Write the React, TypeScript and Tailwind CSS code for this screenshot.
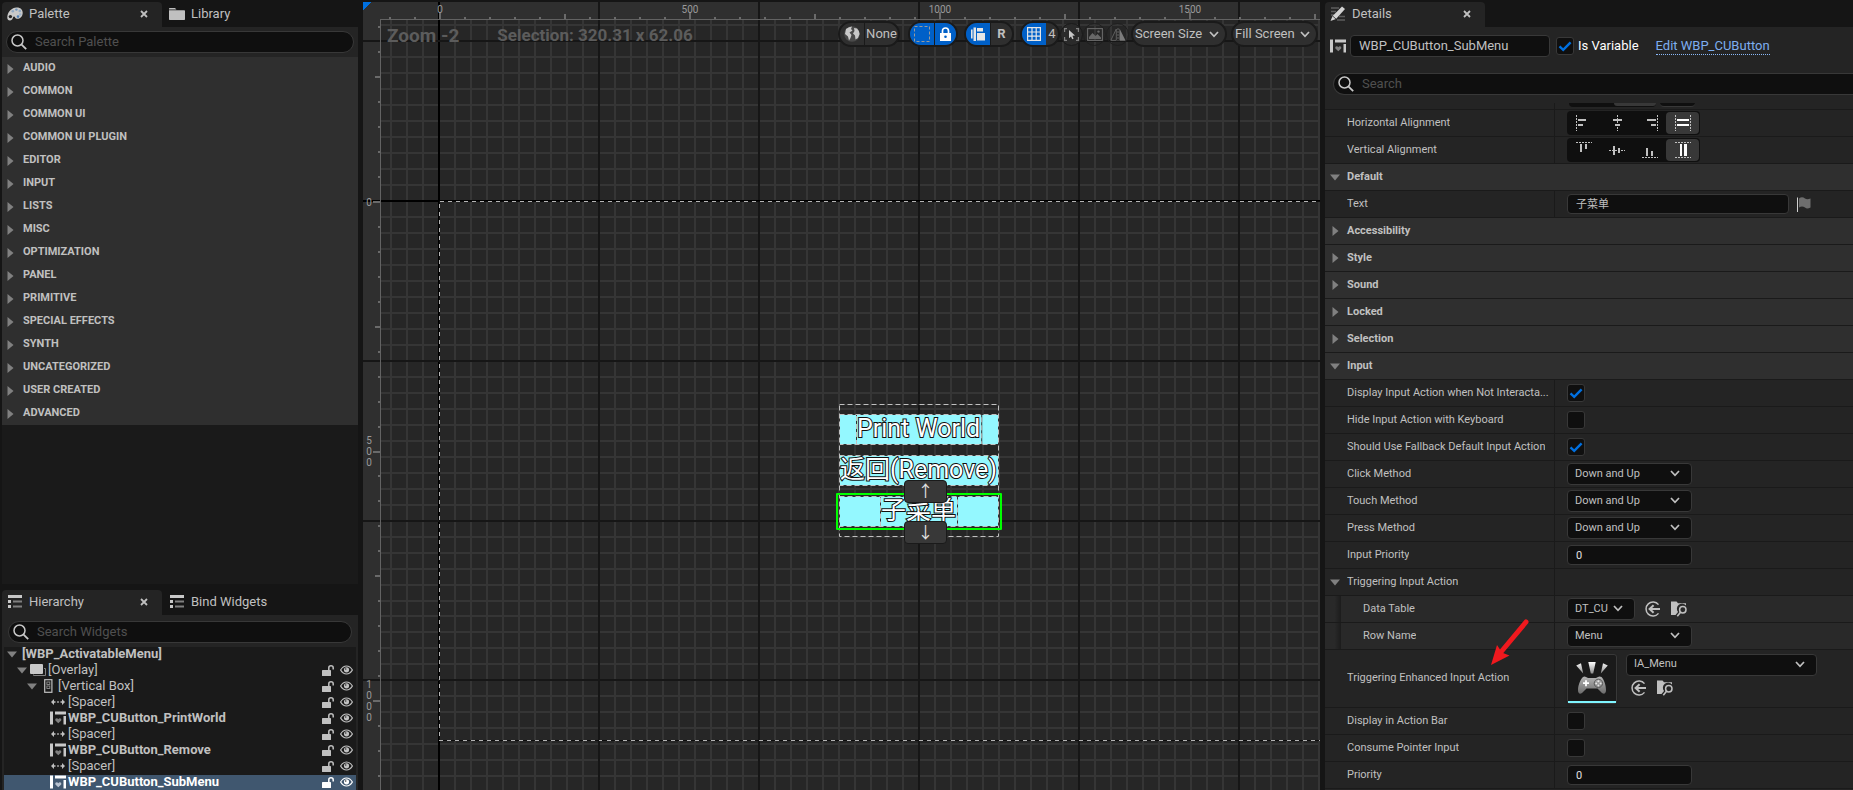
import React, { useState } from "react";

const PALETTE_GROUPS = [
  "AUDIO",
  "COMMON",
  "COMMON UI",
  "COMMON UI PLUGIN",
  "EDITOR",
  "INPUT",
  "LISTS",
  "MISC",
  "OPTIMIZATION",
  "PANEL",
  "PRIMITIVE",
  "SPECIAL EFFECTS",
  "SYNTH",
  "UNCATEGORIZED",
  "USER CREATED",
  "ADVANCED",
];

type TreeItem = {
  label: string;
  icon: "overlay" | "vbox" | "spacer" | "widget";
  indent: string;
  open?: boolean;
  bold?: boolean;
  selected?: boolean;
};

const TREE: TreeItem[] = [
  { label: "[Overlay]", icon: "overlay", indent: "pl-[13px]", open: true },
  { label: "[Vertical Box]", icon: "vbox", indent: "pl-[23px]", open: true },
  { label: "[Spacer]", icon: "spacer", indent: "pl-[46px]" },
  { label: "WBP_CUButton_PrintWorld", icon: "widget", indent: "pl-[46px]", bold: true },
  { label: "[Spacer]", icon: "spacer", indent: "pl-[46px]" },
  { label: "WBP_CUButton_Remove", icon: "widget", indent: "pl-[46px]", bold: true },
  { label: "[Spacer]", icon: "spacer", indent: "pl-[46px]" },
  { label: "WBP_CUButton_SubMenu", icon: "widget", indent: "pl-[46px]", bold: true, selected: true },
];

/* ---------- icons ---------- */

function ArrowRight() {
  return (
    <svg width="7" height="10" viewBox="0 0 7 10" fill="#808080" className="shrink-0">
      <path d="M0.5 0 L6.5 5 L0.5 10 Z" />
    </svg>
  );
}

function ArrowDown() {
  return (
    <svg width="10" height="7" viewBox="0 0 10 7" fill="#808080" className="shrink-0">
      <path d="M0 0.5 H10 L5 6.5 Z" />
    </svg>
  );
}

function Chevron({ className = "" }: { className?: string }) {
  return (
    <svg width="10" height="7" viewBox="0 0 10 7" className={className} fill="none" stroke="#c0c0c0" strokeWidth="1.7">
      <path d="M1 1 L5 5.3 L9 1" />
    </svg>
  );
}

function SearchIcon() {
  return (
    <svg width="16" height="16" viewBox="0 0 16 16" fill="none" stroke="#c8c8c8" strokeWidth="1.5" className="shrink-0">
      <circle cx="6.5" cy="6.5" r="5.5" />
      <path d="M10.6 10.6 L15.2 15.2" strokeWidth="1.8" />
    </svg>
  );
}

function PaletteIcon() {
  return (
    <svg width="16" height="14" viewBox="0 0 16 14" className="shrink-0">
      <path
        d="M9.5 0.5 C13 0.2 15.8 2.4 15.7 6 C15.6 9.8 12.5 12.2 9.6 11.8 C7.8 11.5 8.2 9.6 7 9.6 C5.6 9.6 6.2 13.5 3 13.5 C1 13.5 0 12 0.3 9.5 C0.9 4.5 4.8 0.8 9.5 0.5 Z"
        fill="#c9c9c9"
      />
      <circle cx="3.4" cy="9.6" r="1.7" fill="#242424" />
      <circle cx="5.8" cy="4.3" r="1.3" fill="#8fa9c4" />
      <circle cx="9.4" cy="2.6" r="1.2" fill="#6f94bb" />
      <circle cx="12.8" cy="4" r="1.3" fill="#8fa9c4" />
      <circle cx="13.2" cy="7.4" r="1.2" fill="#9db4cb" />
      <circle cx="11" cy="9.6" r="1.3" fill="#4f7fb5" />
    </svg>
  );
}

function FolderIcon() {
  return (
    <svg width="16" height="12" viewBox="0 0 16 12" fill="#c0c0c0" className="shrink-0">
      <path d="M0.5 0 H6 L7.5 1.5 H0 V0.5 Z M0 2.3 H15.3 Q16 2.3 16 3 V11.3 Q16 12 15.3 12 H0.7 Q0 12 0 11.3 Z" />
    </svg>
  );
}

function ListIcon() {
  return (
    <svg width="16" height="13" viewBox="0 0 16 13" className="shrink-0">
      <path d="M1 0 H15 V3 H1 Z M1 5 H4 V8 H1 Z M1 10 H4 V13 H1 Z" fill="#c8c8c8" />
      <path d="M6 5.5 H15 V7.5 H6 Z M6 10.5 H15 V12.5 H6 Z" fill="#808080" />
    </svg>
  );
}

function DetailsIcon() {
  return (
    <svg width="16" height="16" viewBox="0 0 16 16" className="shrink-0">
      <path d="M1 2 H9 M1 5.5 H6 M1 9 H4 M9 10.5 H15 M7 14 H15" stroke="#5c5c5c" strokeWidth="1.6" />
      <path d="M12 0.5 L15 3 L6 13 L0.5 15 L2.6 10 Z" fill="#d2d2d2" />
      <path d="M2.6 10 L6 13" stroke="#242424" strokeWidth="0.8" />
    </svg>
  );
}

function WidgetIcon({ bright = false }: { bright?: boolean }) {
  return (
    <svg width="16" height="14" viewBox="0 0 16 14" className="shrink-0" fill={bright ? "#ffffff" : "#c8c8c8"}>
      <path d="M0 0.5 H3 V13.5 H0 Z M5 0.5 H16 V3.5 H5 Z M13.5 5 H16 V13.5 H13.5 Z" />
      <path d="M8.3 12.3 L5.4 9.4 C4.6 7.2 7.4 6.4 8.3 8.2 C9.2 6.4 12 7.2 11.2 9.4 Z" fill={bright ? "#b8c2d0" : "#808080"} />
    </svg>
  );
}

function OverlayIcon() {
  return (
    <svg width="16" height="12" viewBox="0 0 16 12" className="shrink-0">
      <path d="M14 4.5 H15.5 V11.5 H3.5 V10.5" fill="none" stroke="#808080" />
      <rect x="0" y="0" width="13" height="10" rx="1" fill="#c8c8c8" />
    </svg>
  );
}

function VBoxIcon() {
  return (
    <svg width="9" height="14" viewBox="0 0 9 14" className="shrink-0" fill="none">
      <rect x="0.7" y="0.7" width="7.2" height="12.6" stroke="#c0c0c0" strokeWidth="1.2" />
      <rect x="2.9" y="3" width="2.9" height="2.5" stroke="#909090" strokeWidth="0.9" />
      <rect x="2.9" y="7" width="2.9" height="2.5" stroke="#909090" strokeWidth="0.9" />
    </svg>
  );
}

function SpacerIcon() {
  return (
    <svg width="16" height="8" viewBox="0 0 16 8" className="shrink-0" fill="#c0c0c0">
      <path d="M1 4 L4 1 V3.2 H5.5 V4.8 H4 V7 Z M7.2 3.2 H8.8 V4.8 H7.2 Z M15 4 L12 1 V3.2 H10.5 V4.8 H12 V7 Z" />
    </svg>
  );
}

function UnlockIcon() {
  return (
    <svg width="12" height="11" viewBox="0 0 12 11" className="shrink-0">
      <rect x="0" y="5" width="9" height="6" rx="0.6" fill="currentColor" />
      <path d="M6.8 5 V2.8 Q6.8 0.8 9 0.8 Q11.2 0.8 11.2 2.8 V4.6" fill="none" stroke="currentColor" strokeWidth="1.5" />
    </svg>
  );
}

function EyeIcon() {
  return (
    <svg width="13" height="10" viewBox="0 0 13 10" className="shrink-0" fill="none" stroke="currentColor">
      <path d="M0.6 5 Q3 1 6.5 1 Q10 1 12.4 5 Q10 9 6.5 9 Q3 9 0.6 5 Z" strokeWidth="1.2" />
      <circle cx="6.5" cy="4.8" r="2.6" fill="currentColor" stroke="none" />
      <circle cx="5.7" cy="4" r="0.8" fill="#333" stroke="none" />
    </svg>
  );
}

function UseIcon() {
  return (
    <svg width="16" height="16" viewBox="0 0 16 16" fill="none" stroke="#c0c0c0" strokeWidth="1.5">
      <path d="M13.5 3.6 A7 7 0 1 0 13.5 12.4" />
      <path d="M15 8 H5 M8.6 4.2 L4.6 8 L8.6 11.8" strokeWidth="2" />
    </svg>
  );
}

function BrowseIcon() {
  return (
    <svg width="16" height="16" viewBox="0 0 16 16">
      <path d="M0 0.5 H5.5 L7 2.2 H15 V4.6 A5 5 0 0 0 7 11 L4.5 14 H0 Z" fill="#c0c0c0" />
      <circle cx="11.8" cy="8.8" r="3.2" fill="none" stroke="#c0c0c0" strokeWidth="1.5" />
      <path d="M9.5 11.2 L6.3 15.2" stroke="#c0c0c0" strokeWidth="1.6" />
    </svg>
  );
}

function FlagIcon() {
  return (
    <svg width="14" height="15" viewBox="0 0 14 15">
      <path d="M0.5 0.5 V15" stroke="#d0d0d0" />
      <path d="M2 1.5 Q5 -1 8 1.5 Q10 3 13.5 1.5 V10.5 Q10 12.5 8 10.5 Q5 8.5 2 10.5 Z" fill="#6e6e6e" />
    </svg>
  );
}

function GamepadThumb() {
  return (
    <svg width="36" height="36" viewBox="0 0 36 36" className="shrink-0">
      <defs>
        <linearGradient id="pad" x1="0" y1="0" x2="0" y2="1">
          <stop offset="0" stopColor="#b4b4b4" />
          <stop offset="1" stopColor="#6c6c6c" />
        </linearGradient>
        <linearGradient id="ray" x1="0" y1="0" x2="0" y2="1">
          <stop offset="0" stopColor="#ffffff" />
          <stop offset="1" stopColor="#8c8c8c" />
        </linearGradient>
      </defs>
      <path d="M14.3 1 H21.7 L19.2 12.5 H16.8 Z M2.2 4.4 L7 2.2 L9.2 12.6 Z M33.8 4.4 L29 2.2 L26.8 12.6 Z" fill="url(#ray)" />
      <path
        d="M9 16 Q10.5 14.8 12 16 L14 17 H22 L24 16 Q25.5 14.8 27.5 16 C30.5 19 32 25 32 29 C32 33.5 29 33.5 27 31 L23.5 27.5 H12.5 L9 31 C7 33.5 4 33.5 4 29 C4 25 5.8 19 9 16 Z"
        fill="url(#pad)"
      />
      <path d="M12 19.2 V25.2 M9 22.2 H15" stroke="#ffffff" strokeWidth="1.8" />
      <circle cx="24.4" cy="22.4" r="4.2" fill="none" stroke="#5c5c5c" />
      <g fill="#e6e6e6">
        <circle cx="24.4" cy="20.2" r="1" />
        <circle cx="24.4" cy="24.6" r="1" />
        <circle cx="22.2" cy="22.4" r="1" />
        <circle cx="26.6" cy="22.4" r="1" />
      </g>
    </svg>
  );
}

/* ---------- shared pieces ---------- */

function Tabs({ first, second }: { first: [React.ReactNode, string]; second?: [React.ReactNode, string] }) {
  return (
    <div className="flex h-[25px] shrink-0 text-[13px] text-[#c0c0c0]">
      <div className="flex w-[160px] items-center gap-1.5 rounded-t bg-[#242424] pb-0.5 pl-[5px]">
        {first[0]}
        <span className="flex-1">{first[1]}</span>
        <button aria-label={`Close ${first[1]}`} className="mr-3 p-0.5">
          <svg width="8" height="8" viewBox="0 0 8 8" stroke="#c0c0c0" strokeWidth="1.8">
            <path d="M1 1 L7 7 M7 1 L1 7" />
          </svg>
        </button>
      </div>
      {second && (
        <button className="flex items-center gap-1.5 pb-0.5 pl-[7px]">
          {second[0]}
          {second[1]}
        </button>
      )}
    </div>
  );
}

function SearchBox({ placeholder, className }: { placeholder: string; className: string }) {
  return (
    <label className={`flex h-[22px] shrink-0 items-center gap-2 border border-[#383838] bg-[#0f0f0f] pl-1 ${className}`}>
      <SearchIcon />
      <input
        type="text"
        aria-label={placeholder}
        placeholder={placeholder}
        className="h-5 min-w-0 flex-1 bg-transparent pb-0.5 text-[13px] text-[#c0c0c0] outline-none placeholder:text-[#4f4f4f]"
      />
    </label>
  );
}

function Checkbox({ id, defaultChecked = false }: { id: string; defaultChecked?: boolean }) {
  const [checked, setChecked] = useState(defaultChecked);
  return (
    <span className="relative block size-[18px] shrink-0">
      <input
        id={id}
        type="checkbox"
        checked={checked}
        onChange={(e) => setChecked(e.target.checked)}
        className="block size-[18px] appearance-none rounded-[3px] border border-[#383838] bg-[#0f0f0f]"
      />
      {checked && (
        <svg viewBox="0 0 18 18" className="pointer-events-none absolute inset-0" fill="none" stroke="#0070e0" strokeWidth="2.4">
          <path d="M3.5 9.4 L7.2 12.8 L14.6 5.4" />
        </svg>
      )}
    </span>
  );
}

function Select({ id, value, className }: { id: string; value: string; className: string }) {
  return (
    <span className={`relative block h-[22px] ${className}`}>
      <select
        id={id}
        aria-label={value}
        className="block h-[22px] w-full appearance-none rounded border border-[#383838] bg-[#0f0f0f] pl-[7px] text-[11px] text-[#c0c0c0]"
      >
        <option>{value}</option>
      </select>
      <Chevron className="pointer-events-none absolute right-3 top-[7px]" />
    </span>
  );
}

function NumberBox({ id }: { id: string }) {
  return (
    <input
      id={id}
      type="text"
      defaultValue="0"
      className="h-5 w-[125px] rounded border border-[#383838] bg-[#0f0f0f] px-2 text-[11px] text-[#e0e0e0]"
    />
  );
}

function Section({ title, open = false }: { title: string; open?: boolean }) {
  return (
    <button className="flex h-[27px] w-full shrink-0 items-center border-b border-[#1a1a1a] bg-[#2f2f2f] text-left text-[11px] font-bold text-[#c0c0c0]">
      <span className="flex w-[22px] justify-center pr-0.5">{open ? <ArrowDown /> : <ArrowRight />}</span>
      {title}
    </button>
  );
}

type RowProps = {
  label: string;
  htmlFor?: string;
  nested?: boolean;
  arrow?: boolean;
  height?: string;
  children?: React.ReactNode;
};

function Row({ label, htmlFor, nested, arrow, height = "h-[27px]", children }: RowProps) {
  return (
    <div className={`flex shrink-0 border-b border-[#1a1a1a] ${height} ${nested ? "bg-[#292929]" : "bg-[#242424]"}`}>
      <div className="flex w-[230px] shrink-0 items-center border-r border-[#1a1a1a] text-[11px] text-[#c0c0c0]">
        {nested ? (
          <span className="mr-[22px] h-full w-4 bg-linear-to-r from-[#292929] from-60% to-[#1c1c1c]"></span>
        ) : (
          <span className="flex w-[22px] shrink-0 justify-center pr-0.5">{arrow && <ArrowDown />}</span>
        )}
        <label htmlFor={htmlFor} className="truncate">
          {label}
        </label>
      </div>
      <div className="flex items-center pl-3">{children}</div>
    </div>
  );
}

function AlignGroup({ label, icons }: { label: string; icons: React.ReactNode[] }) {
  return (
    <div role="group" aria-label={label} className="flex h-6 w-[133px] rounded bg-[#0f0f0f] p-px">
      {icons.map((icon, i) => (
        <button
          key={i}
          aria-label={`${label} ${i + 1}`}
          className={`flex flex-1 items-center justify-center rounded ${i === 3 ? "bg-[#383838]" : ""}`}
        >
          <svg width="16" height="16" viewBox="0 0 16 16" fill={i === 3 ? "#ffffff" : "#c0c0c0"} stroke="none">
            {icon}
          </svg>
        </button>
      ))}
    </div>
  );
}

const dotted = { stroke: "#c0c0c0", strokeWidth: 1, strokeDasharray: "2 1" };

const H_ICONS = [
  <g><path d="M0.5 0 V16" {...dotted} /><path d="M2 4 H10 V6 H2 Z M2 9 H7 V11 H2 Z" /></g>,
  <g><path d="M8.5 0 V16" {...dotted} /><path d="M4 4 H13 V6 H4 Z M6 9 H11 V11 H6 Z" /></g>,
  <g><path d="M15.5 0 V16" {...dotted} /><path d="M5 4 H14 V6 H5 Z M9 9 H14 V11 H9 Z" /></g>,
  <g><path d="M0.5 0 V16 M15.5 0 V16" {...dotted} /><path d="M2 4 H14 V6 H2 Z M2 9 H14 V11 H2 Z" /></g>,
];

const V_ICONS = [
  <g><path d="M0 0.5 H16" {...dotted} /><path d="M4 2 H6 V10 H4 Z M9 2 H11 V7 H9 Z" /></g>,
  <g><path d="M0 8.5 H16" {...dotted} /><path d="M4 4 H6 V13 H4 Z M9 6 H11 V11 H9 Z" /></g>,
  <g><path d="M0 15.5 H16" {...dotted} /><path d="M4 6 H6 V14 H4 Z M9 9 H11 V14 H9 Z" /></g>,
  <g><path d="M0 0.5 H16 M0 15.5 H16" {...dotted} /><path d="M5 2 H7 V14 H5 Z M9 2 H12 V14 H9 Z" /></g>,
];

/* ---------- left column ---------- */

function PalettePanel() {
  return (
    <section className="flex min-h-0 flex-1 flex-col">
      <Tabs first={[<PaletteIcon />, "Palette"]} second={[<FolderIcon />, "Library"]} />
      <div className="flex min-h-0 flex-1 flex-col bg-[#1a1a1a]">
        <div className="flex shrink-0 bg-[#242424] p-1">
          <SearchBox placeholder="Search Palette" className="flex-1 rounded-full" />
        </div>
        <ul className="bg-[#2f2f2f] text-[11px] font-bold text-[#c0c0c0]">
          {PALETTE_GROUPS.map((name) => (
            <li key={name}>
              <button className="flex h-[23px] w-full items-center gap-[9px] pl-[5px]">
                <ArrowRight />
                {name}
              </button>
            </li>
          ))}
        </ul>
      </div>
    </section>
  );
}

const TREE_ICONS = {
  overlay: <OverlayIcon />,
  vbox: <span className="flex w-4 justify-center"><VBoxIcon /></span>,
  spacer: <SpacerIcon />,
  widget: <WidgetIcon />,
};

function HierarchyPanel() {
  return (
    <section className="flex h-[200px] shrink-0 flex-col">
      <Tabs first={[<ListIcon />, "Hierarchy"]} second={[<ListIcon />, "Bind Widgets"]} />
      <div className="flex min-h-0 flex-1 flex-col bg-[#242424] px-0.5 pt-1.5">
        <SearchBox placeholder="Search Widgets" className="mx-1 rounded-full" />
        <ul className="mt-1 min-h-0 flex-1 overflow-hidden bg-[#1a1a1a] text-[13px] leading-[14px] text-[#c0c0c0]">
          <li className="flex h-4 items-center gap-[5px] pb-0.5 pl-[3px] font-bold">
            <ArrowDown />
            [WBP_ActivatableMenu]
          </li>
          {TREE.map((item, i) => (
            <li
              key={i}
              className={`flex h-4 items-center pb-0.5 pr-[3px] ${item.indent} ${item.bold ? "font-bold" : ""} ${
                item.selected ? "bg-[#40576f] text-white" : ""
              }`}
            >
              {item.open && <span className="mr-[3px]"><ArrowDown /></span>}
              <span className="mr-0.5">{item.selected ? <WidgetIcon bright /> : TREE_ICONS[item.icon]}</span>
              <span className="flex-1">{item.label}</span>
              <button aria-label="Toggle lock" className="mr-1.5"><UnlockIcon /></button>
              <button aria-label="Toggle visibility"><EyeIcon /></button>
            </li>
          ))}
        </ul>
      </div>
    </section>
  );
}

/* ---------- designer ---------- */

const ORIGIN_X = 76;
const ORIGIN_Y = 199;

function range(from: number, to: number) {
  return Array.from({ length: to - from + 1 }, (_, i) => from + i);
}

const gridX = (i: number) => ORIGIN_X - 1 + i * 16;
const gridY = (i: number) => Math.round(ORIGIN_Y - 1 + i * 15.98);

function tickLength(i: number) {
  if (i % 10 === 0) return 7;
  return i % 5 === 0 ? 5 : 2;
}

function GridBackground() {
  const cols = range(-4, 160);
  const rows = range(-12, 100);
  return (
    <svg className="absolute inset-0 h-full w-full" shapeRendering="crispEdges">
      <rect width="100%" height="100%" fill="#262626" />
      {cols.map((i) => <rect key={i} x={gridX(i)} y="0" width="2" height="100%" fill="#353535" />)}
      {rows.map((i) => <rect key={i} x="0" y={gridY(i)} width="100%" height="2" fill="#353535" />)}
      <rect width="100%" height="18" fill="#2f2f2f" />
      <rect width="18" height="100%" fill="#2f2f2f" />
      {cols.filter((i) => i % 10 === 0).map((i) => (
        <rect key={i} x={gridX(i)} y="0" width="2" height="100%" fill={i === 0 ? "#000000" : "#161616"} />
      ))}
      {rows.filter((i) => i % 10 === 0).map((i) => (
        <rect key={i} x="0" y={gridY(i)} width="100%" height="2" fill={i === 0 ? "#000000" : "#161616"} />
      ))}
      <rect x="17" y="17" width="100%" height="1" fill="#626262" />
      <rect x="17" y="17" width="1" height="100%" fill="#626262" />
      {range(-2, 100).map((i) => (
        <rect key={i} x={ORIGIN_X + i * 25} y={17 - tickLength(i)} width="2" height={tickLength(i)} fill="#6a6a6a" />
      ))}
      {range(-7, 60).map((i) => (
        <rect key={i} x={17 - tickLength(i)} y={ORIGIN_Y + Math.round(i * 24.95)} width={tickLength(i)} height="2" fill="#6a6a6a" />
      ))}
      <path d="M0 0 H8 L0 8 Z" fill="#0070e0" />
      {/* bounds of the designed screen */}
      <rect x="76.5" y="199.5" width="960" height="539" fill="none" stroke="#0c0c0c" />
      <rect x="76.5" y="199.5" width="960" height="539" fill="none" stroke="#b4b4b4" strokeDasharray="4 4" />
      <g fontFamily="Roboto" fontSize="10" fill="#9a9a9a" textAnchor="middle">
        {[0, 500, 1000, 1500].map((n) => (
          <text key={n} x={ORIGIN_X + 1 + n / 2} y="11">{n}</text>
        ))}
        {[0, 500, 1000].map((n) => {
          const digits = String(n).split("");
          const top = ORIGIN_Y + n / 2 - (digits.length - 1) * 6 + 5;
          return digits.map((d, i) => <text key={`${n}-${i}`} x="6" y={top + i * 11}>{d}</text>);
        })}
      </g>
    </svg>
  );
}

const pill = "flex h-[26px] items-center overflow-hidden rounded-full border-2 border-[#1a1a1a] bg-[#2f2f2f]";
const segment = "flex h-full items-center justify-center";

function Toolbar() {
  return (
    <div className="absolute right-0.5 top-[19px] flex items-center text-[13px] text-[#c0c0c0]">
      <button className={`${pill} mr-2 w-[62px]`}>
        <span className={`${segment} w-[25px] border-r border-[#1a1a1a]`}>
          <svg width="16" height="16" viewBox="0 0 16 16">
            <circle cx="8" cy="8" r="7.8" fill="#4a4a4a" />
            <path d="M2 3 Q5 0.5 8 0.5 L7 3 L8.5 4.5 L5.5 6.5 L7.5 9 L6.5 12 L5 14.5 L4 10.5 L1 8 Z M10 2 L13 2.6 Q15.5 5 15.6 8 L14 12 L11.5 13.5 L11 9.5 L9 7.5 L10.5 5 Z" fill="#c8c8c8" />
          </svg>
        </span>
        <span className="flex-1">None</span>
      </button>
      <div className={`${pill} mr-1.5 w-[50px]`}>
        <button aria-label="Show outlines" className={`${segment} w-[24px] bg-[#0060c8]`}>
          <svg width="16" height="16" viewBox="0 0 16 16" fill="none" stroke="#9a9a9a" strokeDasharray="3 2">
            <rect x="0.5" y="0.5" width="15" height="15" />
          </svg>
        </button>
        <button aria-label="Respect locks" className={`${segment} flex-1 border-l border-[#1a1a1a] bg-[#0060c8]`}>
          <svg width="11" height="14" viewBox="0 0 11 14">
            <path d="M2.5 6 V4 Q2.5 1 5.5 1 Q8.5 1 8.5 4 V6" fill="none" stroke="#fff" strokeWidth="1.7" />
            <path d="M0 6 H11 V14 H0 Z" fill="#fff" />
            <circle cx="5.5" cy="9.8" r="1.3" fill="#0060c8" />
          </svg>
        </button>
      </div>
      <div className={`${pill} mr-1.5 w-[50px]`}>
        <button aria-label="Flow direction" className={`${segment} w-[24px] bg-[#0060c8]`}>
          <svg width="14" height="14" viewBox="0 0 14 14" fill="#e6e6e6">
            <path d="M0 2.5 H1.6 V11.5 H0 Z M2.5 0.5 H5 V14 H2.5 Z M6 1 H12 V4.5 H6 Z M6 6 H14 V13.5 H6 Z" />
          </svg>
        </button>
        <button className={`${segment} flex-1 border-l border-[#1a1a1a] font-bold`}>R</button>
      </div>
      <div className={`${pill} w-[40px]`}>
        <button aria-label="Grid snapping" className={`${segment} w-[24px] bg-[#0060c8]`}>
          <svg width="14" height="14" viewBox="0 0 14 14" fill="none" stroke="#e6e6e6" strokeWidth="1.2">
            <path d="M0.6 0.6 H13.4 V13.4 H0.6 Z M5 0.6 V13.4 M9.2 0.6 V13.4 M0.6 5 H13.4 M0.6 9.2 H13.4" />
          </svg>
        </button>
        <button className={`${segment} flex-1`}>4</button>
      </div>
      <button aria-label="Zoom to fit" className="flex size-[23px] items-center justify-center rounded-full border border-[#1a1a1a] bg-[#2a2a2a]">
        <svg width="15" height="13" viewBox="0 0 15 13" fill="none" stroke="#808080" strokeWidth="1.2">
          <path d="M3 0.6 H0.6 V4 M12 0.6 H14.4 V4 M3 12.4 H0.6 V9 M12 12.4 H14.4 V9" />
          <path d="M5 2 L11 7.6 L8.4 7.8 L9.6 10.6 L8.2 11.2 L7 8.6 L5 10.2 Z" fill="#c8c8c8" stroke="none" />
        </svg>
      </button>
      <button aria-label="Background image" className="flex size-[23px] items-center justify-center rounded-full border border-[#1f1f1f]">
        <svg width="16" height="13" viewBox="0 0 16 13" fill="#686868">
          <rect x="0.6" y="0.6" width="14.8" height="11.8" fill="none" stroke="#686868" strokeWidth="1.1" />
          <path d="M2 11 V9 L5.5 5 L8.5 8 L10.5 6 L14 9.5 V11 Z" />
          <circle cx="11.5" cy="3.6" r="1.2" />
        </svg>
      </button>
      <button aria-label="Mirror" className="mr-0.5 flex size-[23px] items-center justify-center rounded-full border border-[#1f1f1f]">
        <svg width="16" height="13" viewBox="0 0 16 13">
          <path d="M6.3 1 V12.4 H0.8 Z" fill="none" stroke="#606060" />
          <path d="M8 0 V13" stroke="#606060" strokeDasharray="2 1" />
          <path d="M9.5 0.5 V12.8 H15.6 Z" fill="#7c7c7c" />
        </svg>
      </button>
      <button className={`${pill} mr-1 w-[96px] justify-between pl-0.5 pr-1.5`}>
        Screen Size
        <Chevron />
      </button>
      <button className={`${pill} w-[87px] justify-between pl-0.5 pr-1.5`}>
        Fill Screen
        <Chevron />
      </button>
    </div>
  );
}

function DashedBox({ className = "", children }: { className?: string; children?: React.ReactNode }) {
  return (
    <div className={`relative flex justify-center ${className}`}>
      {children}
      <svg className="pointer-events-none absolute inset-0 h-full w-full overflow-visible" fill="none">
        <rect x="0.5" y="0.5" width="100%" height="100%" stroke="#303030" />
        <rect x="0.5" y="0.5" width="100%" height="100%" stroke="#c0c0c0" strokeDasharray="5 3" />
      </svg>
    </div>
  );
}

function PreviewButton({ text }: { text: string }) {
  return (
    <DashedBox className="h-[30px] bg-[#94f8ff]">
      <DashedBox className="h-[30px] px-px">
        <span className="whitespace-nowrap text-[25px] leading-[30px] text-white [-webkit-text-stroke:2px_#101010] [paint-order:stroke_fill]">
          {text}
        </span>
      </DashedBox>
    </DashedBox>
  );
}

const moveButton =
  "absolute left-[65px] h-[23px] w-[43px] rounded border border-[#1a1a1a] bg-[#383838] text-[16px] leading-5 text-[#e0e0e0]";

function Designer() {
  return (
    <main className="relative min-w-0 flex-1 overflow-hidden">
      <GridBackground />
      <div className="absolute left-6 top-5 flex h-7 items-center gap-[38px] font-bold text-[#5c5c5c]">
        <p className="text-[19px]">Zoom -2</p>
        <p className="text-[17px]">Selection: 320.31 x 62.06</p>
      </div>
      <Toolbar />
      <div className="absolute left-[476px] top-[402px] w-[159px]">
        <DashedBox className="h-[132px]">
          <div className="flex w-full flex-col gap-[11px] pt-2.5">
            <PreviewButton text="Print World" />
            <PreviewButton text="返回(Remove)" />
            <PreviewButton text="子菜单" />
          </div>
        </DashedBox>
        <div className="absolute -left-[3px] top-[89px] h-[37px] w-[166px] rounded-[1px] border-2 border-[#00ff00]"></div>
        <button aria-label="Move up" className={`${moveButton} top-[76px]`}>↑</button>
        <button aria-label="Move down" className={`${moveButton} top-[117px]`}>↓</button>
      </div>
    </main>
  );
}

/* ---------- details ---------- */

function AssetButtons() {
  return (
    <>
      <button aria-label="Use selected asset" className="mr-2.5"><UseIcon /></button>
      <button aria-label="Browse to asset"><BrowseIcon /></button>
    </>
  );
}

function DetailsPanel() {
  return (
    <aside className="relative flex w-[528px] shrink-0 flex-col overflow-hidden">
      <Tabs first={[<DetailsIcon />, "Details"]} />
      <div className="flex min-h-0 flex-1 flex-col bg-[#242424]">
        <div className="flex h-[38px] shrink-0 items-center pl-[5px] text-[13px]">
          <WidgetIcon />
          <input
            aria-label="Widget name"
            defaultValue="WBP_CUButton_SubMenu"
            className="ml-1 h-[22px] w-[200px] rounded border border-[#383838] bg-[#0f0f0f] px-2 pb-0.5 text-[#c0c0c0]"
          />
          <span className="ml-1.5"><Checkbox id="is-variable" defaultChecked /></span>
          <label htmlFor="is-variable" className="ml-1 text-white">Is Variable</label>
          <a href="#" className="ml-[17px] border-b border-dotted border-[#8ab8f8] leading-4 text-[#7eaef0]">Edit WBP_CUButton</a>
        </div>
        <div className="flex shrink-0 pb-2 pl-2 pt-2">
          <SearchBox placeholder="Search" className="flex-1 rounded-l-full border-r-0" />
        </div>

        <div className="flex min-h-0 flex-1 flex-col overflow-hidden">
          {/* tail of the row scrolled under the search box */}
          <div className="flex h-[7px] shrink-0 border-b border-[#1a1a1a]">
            <div className="w-[230px] border-r border-[#1a1a1a]"></div>
            <div className="ml-3.5 flex h-1 w-[87px] rounded-b bg-[#0f0f0f]">
              <div className="ml-auto h-[3px] w-[42px] rounded-b bg-[#383838]"></div>
            </div>
            <div className="ml-1 h-1 w-[35px] rounded-b border-b border-[#383838] bg-[#0f0f0f]"></div>
          </div>
          <Row label="Horizontal Alignment"><AlignGroup label="Horizontal Alignment" icons={H_ICONS} /></Row>
          <Row label="Vertical Alignment"><AlignGroup label="Vertical Alignment" icons={V_ICONS} /></Row>
          <Section title="Default" open />
          <Row label="Text" htmlFor="text">
            <input
              id="text"
              defaultValue="子菜单"
              className="mr-2 h-5 w-[222px] rounded border border-[#383838] bg-[#0f0f0f] px-2 pb-0.5 text-[11px] text-[#c0c0c0]"
            />
            <button aria-label="Localization"><FlagIcon /></button>
          </Row>
          <Section title="Accessibility" />
          <Section title="Style" />
          <Section title="Sound" />
          <Section title="Locked" />
          <Section title="Selection" />
          <Section title="Input" open />
          <Row label="Display Input Action when Not Interacta..." htmlFor="display-input"><Checkbox id="display-input" defaultChecked /></Row>
          <Row label="Hide Input Action with Keyboard" htmlFor="hide-input"><Checkbox id="hide-input" /></Row>
          <Row label="Should Use Fallback Default Input Action" htmlFor="fallback"><Checkbox id="fallback" defaultChecked /></Row>
          <Row label="Click Method" htmlFor="click"><Select id="click" value="Down and Up" className="w-[125px]" /></Row>
          <Row label="Touch Method" htmlFor="touch"><Select id="touch" value="Down and Up" className="w-[125px]" /></Row>
          <Row label="Press Method" htmlFor="press"><Select id="press" value="Down and Up" className="w-[125px]" /></Row>
          <Row label="Input Priority" htmlFor="input-priority"><NumberBox id="input-priority" /></Row>
          <Row label="Triggering Input Action" arrow />
          <Row label="Data Table" htmlFor="data-table" nested>
            <span className="mr-2.5"><Select id="data-table" value="DT_CU" className="w-[68px]" /></span>
            <AssetButtons />
          </Row>
          <Row label="Row Name" htmlFor="row-name" nested><Select id="row-name" value="Menu" className="w-[125px]" /></Row>
          <Row label="Triggering Enhanced Input Action" htmlFor="ia" height="h-[58px]">
            <div className="mr-[9px] flex h-[50px] w-[50px] flex-col items-center justify-between rounded-[3px] border border-[#383838] bg-[#1a1a1a] pt-1.5 shadow">
              <GamepadThumb />
              <span className="h-0.5 w-full shrink-0 bg-[#7ff5ff]"></span>
            </div>
            <div className="h-[50px]">
              <Select id="ia" value="IA_Menu" className="w-[191px]" />
              <div className="flex pl-[5px] pt-1"><AssetButtons /></div>
            </div>
          </Row>
          <Row label="Display in Action Bar" htmlFor="action-bar"><Checkbox id="action-bar" /></Row>
          <Row label="Consume Pointer Input" htmlFor="consume"><Checkbox id="consume" /></Row>
          <Row label="Priority" htmlFor="priority"><NumberBox id="priority" /></Row>
        </div>
      </div>

      {/* callout pointing at the enhanced input row */}
      <svg className="pointer-events-none absolute left-[164px] top-[614px]" width="42" height="52" viewBox="0 0 42 52">
        <path d="M37 6 L12 36" stroke="#f0191e" strokeWidth="5" strokeLinecap="round" />
        <path d="M2 49 L8 29 L12 35 L14 37 L20.5 39.5 Z" fill="#f0191e" />
      </svg>
    </aside>
  );
}

export default function App() {
  return (
    <div className="flex h-screen gap-[5px] overflow-hidden bg-[#151515] pl-0.5 pt-0.5 font-['Roboto','Noto_Sans_CJK_SC',sans-serif]">
      <aside className="flex w-[356px] shrink-0 flex-col gap-1.5">
        <PalettePanel />
        <HierarchyPanel />
      </aside>
      <Designer />
      <DetailsPanel />
    </div>
  );
}
